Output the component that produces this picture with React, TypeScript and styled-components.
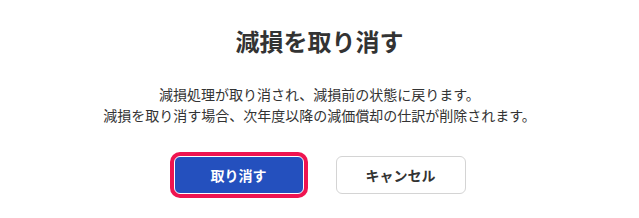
import React from 'react';
import styled, { createGlobalStyle } from 'styled-components';

const GlobalStyle = createGlobalStyle`
  html, body {
    margin: 0;
    padding: 0;
    background: #ffffff;
  }
  body {
    font-family: "Noto Sans CJK JP", "Noto Sans", sans-serif;
    color: #333333;
  }
`;

const Dialog = styled.div`
  width: 639px;
  height: 218px;
  box-sizing: border-box;
  padding-top: 23px;
  display: flex;
  flex-direction: column;
  align-items: center;
  background: #ffffff;
`;

const Title = styled.h2`
  margin: 0;
  font-size: 24px;
  line-height: 36px;
  font-weight: 700;
  color: #333333;
`;

const Message = styled.p`
  margin: 25px 0 0;
  font-size: 14px;
  line-height: 21px;
  text-align: center;
  color: #333333;
`;

const Actions = styled.div`
  display: flex;
  gap: 32px;
  margin-top: 30px;
`;

const Button = styled.button<{ primary?: boolean }>`
  width: 130px;
  height: 38px;
  box-sizing: border-box;
  border-radius: 6px;
  font-family: inherit;
  font-size: 14px;
  font-weight: 700;
  cursor: pointer;
  border: 1px solid ${(p) => (p.primary ? '#ffffff' : '#d4d4d4')};
  background: ${(p) => (p.primary ? '#2450be' : '#ffffff')};
  color: ${(p) => (p.primary ? '#ffffff' : '#333333')};
  box-shadow: ${(p) => (p.primary ? '0 0 0 4px #ef1450' : 'none')};
`;

export default function App() {
  return (
    <>
      <GlobalStyle />
      <Dialog>
        <Title>減損を取り消す</Title>
        <Message>
          減損処理が取り消され、減損前の状態に戻ります。
          <br />
          減損を取り消す場合、次年度以降の減価償却の仕訳が削除されます。
        </Message>
        <Actions>
          <Button primary>取り消す</Button>
          <Button>キャンセル</Button>
        </Actions>
      </Dialog>
    </>
  );
}
